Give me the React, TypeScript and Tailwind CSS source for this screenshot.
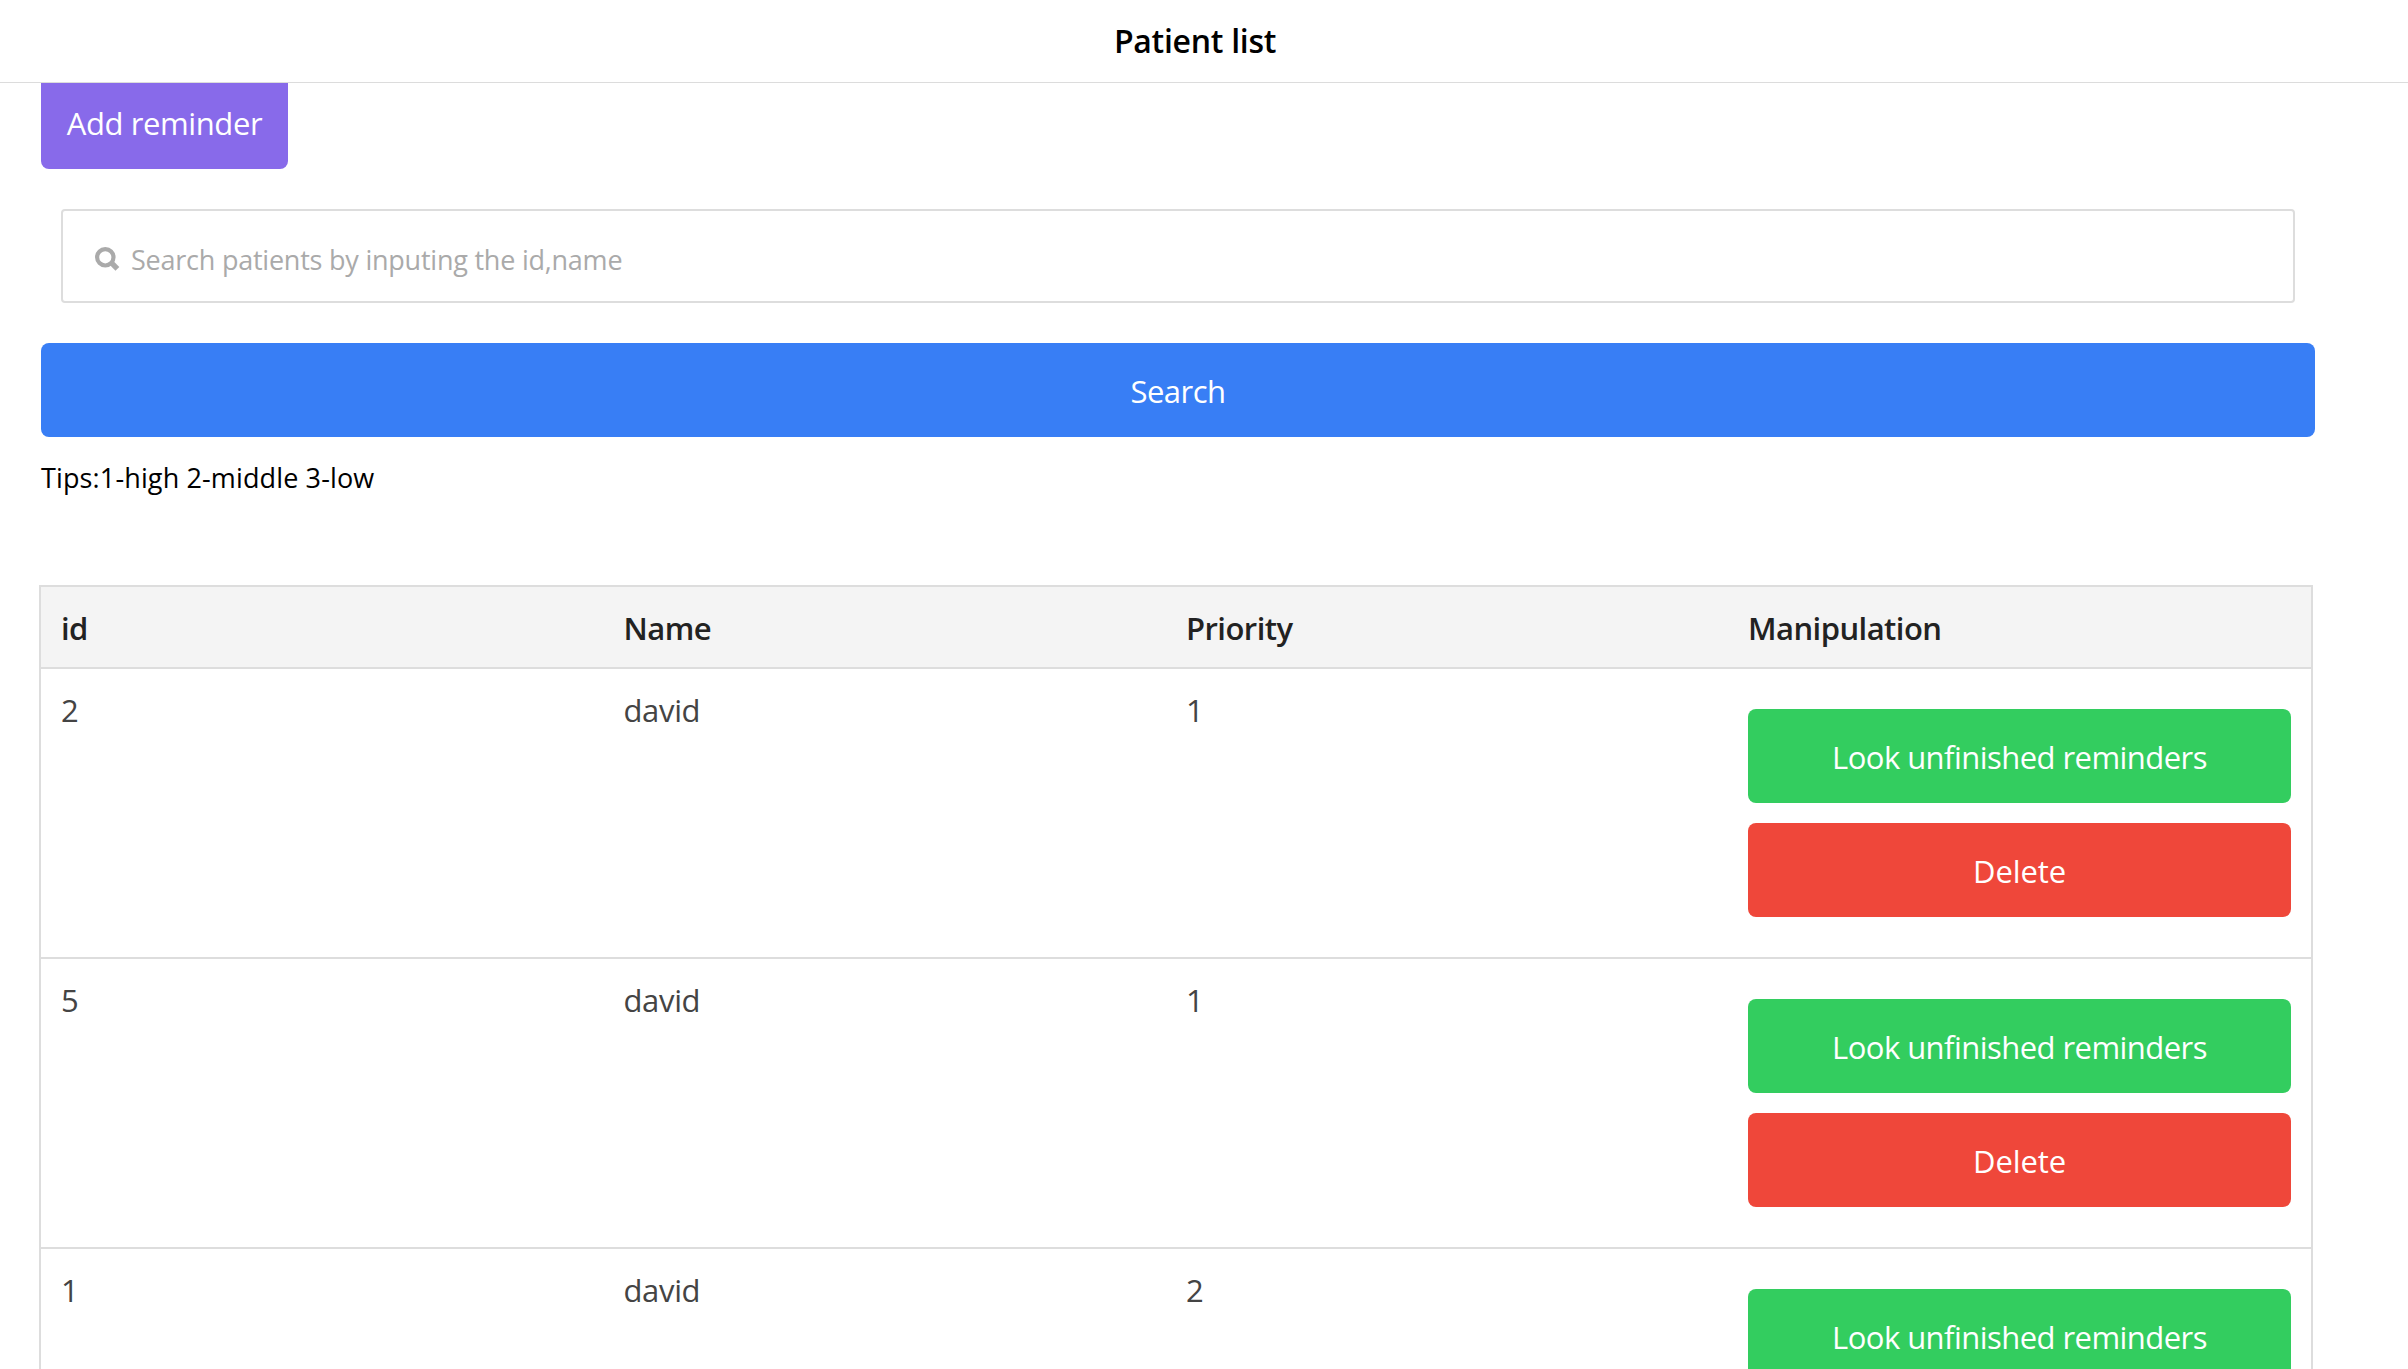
import React from "react";

type Patient = { id: number; name: string; priority: number };

const patients: Patient[] = [
  { id: 2, name: "david", priority: 1 },
  { id: 5, name: "david", priority: 1 },
  { id: 1, name: "david", priority: 2 },
];

function SearchIcon() {
  return (
    <svg className="h-6 w-[25px] shrink-0" viewBox="0 0 25 24" fill="none" stroke="#aaaaaa">
      <circle cx="10.3" cy="10.3" r="8.2" strokeWidth="4.2" />
      <path d="M16 15.4 L22.4 21.8" strokeWidth="5.4" />
    </svg>
  );
}

function ActionButton({ label, color }: { label: string; color: string }) {
  return (
    <button
      className={`block h-[94px] w-full rounded-lg pt-0.5 text-center text-[31px] leading-[92px] text-white ${color}`}
    >
      {label}
    </button>
  );
}

function PatientRow({ patient }: { patient: Patient }) {
  return (
    <div className="grid h-[290px] grid-cols-[562.5px_562.5px_562px_1fr] border-b-2 border-[#dddddd] text-[31px] leading-[82px] tracking-[-0.35px] text-[#444444]">
      <div className="px-5">{patient.id}</div>
      <div className="px-5">{patient.name}</div>
      <div className="px-5">{patient.priority}</div>
      <div className="flex flex-col gap-5 px-5 pt-10">
        <ActionButton label="Look unfinished reminders" color="bg-[#33cd5f] tracking-[-0.55px]" />
        <ActionButton label="Delete" color="bg-[#ef473a] tracking-[-0.1px]" />
      </div>
    </div>
  );
}

export default function App() {
  return (
    <div className="h-[1369px] overflow-hidden bg-white font-['Open_Sans','Noto_Sans',sans-serif] text-black">
      <header className="relative z-10 h-[83px] border-b border-[#dcdcdc] bg-white pr-[18px] text-center">
        <h1 className="text-[32px] leading-[82px] font-semibold tracking-[-0.3px]">Patient list</h1>
      </header>

      <main className="-mt-2 pr-[93px] pl-[41px]">
        <button className="block h-[94px] w-[247px] rounded-lg bg-[#886aea] pt-0.5 text-[31px] leading-[92px] tracking-[-0.4px] text-white">
          Add reminder
        </button>

        <div className="mx-5 mt-10 flex h-[94px] items-center gap-[11px] rounded border-2 border-[#dddddd] pt-[6px] pl-8">
          <SearchIcon />
          <span className="pt-0.5 text-[27px] leading-9 tracking-[-0.23px] text-[#aaaaaa]">
            Search patients by inputing the id,name
          </span>
        </div>

        <button className="mt-10 block h-[94px] w-full rounded-lg bg-[#387ef5] pt-0.5 text-[31px] leading-[92px] tracking-[-0.55px] text-white">
          Search
        </button>

        <p className="mt-5 h-[128px] text-[27px] leading-[42px] tracking-[0.13px]">Tips:1-high 2-middle 3-low</p>

        <section className="-ml-0.5 w-[2274px] border-2 border-[#dddddd]">
          <div className="grid h-[82px] grid-cols-[562.5px_562.5px_562px_1fr] border-b-2 border-[#dddddd] bg-[#f4f4f4] text-[31px] leading-[82px] font-semibold tracking-[-0.55px] text-[#222222]">
            <div className="px-5">id</div>
            <div className="px-5">Name</div>
            <div className="px-5">Priority</div>
            <div className="px-5">Manipulation</div>
          </div>
          {patients.map((p) => (
            <PatientRow key={p.id} patient={p} />
          ))}
        </section>
      </main>
    </div>
  );
}
